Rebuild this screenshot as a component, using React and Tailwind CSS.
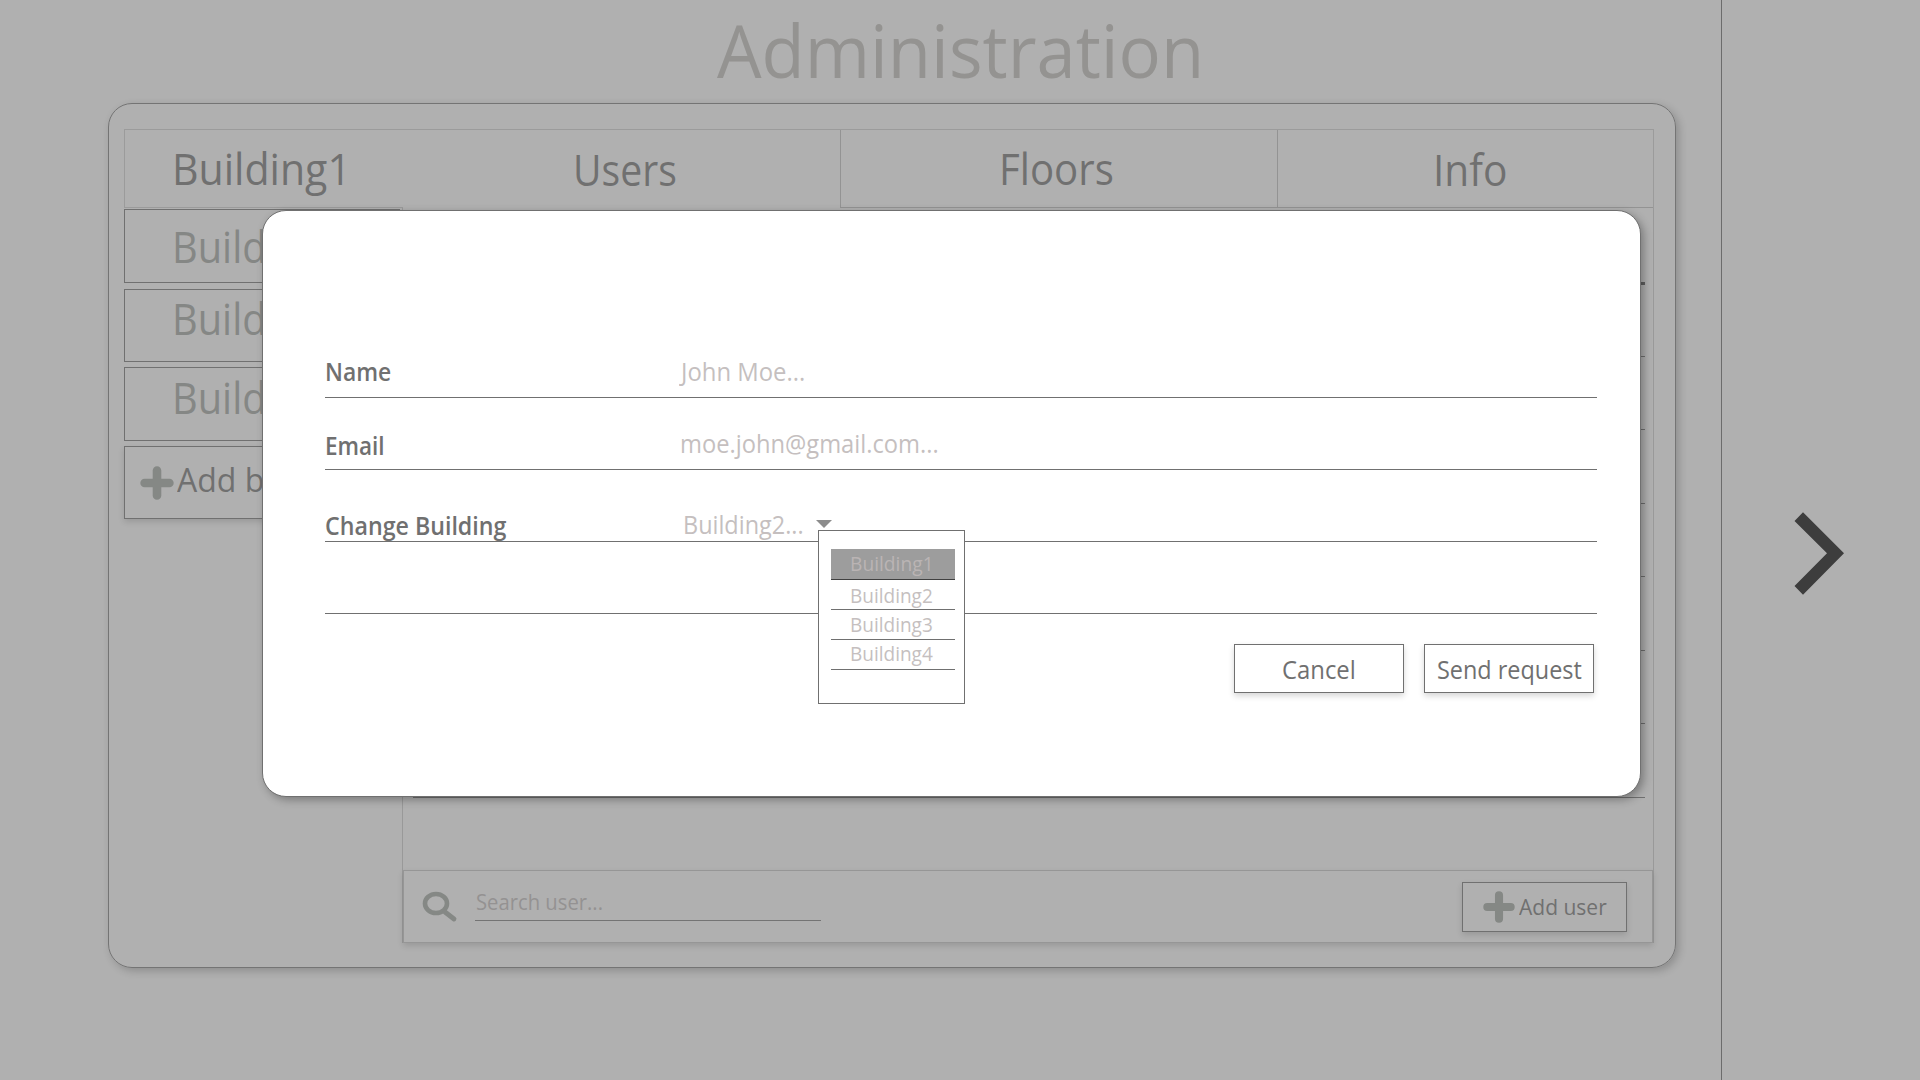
function Label({ className = "", children }) {
  return (
    <span className={`block w-max origin-left whitespace-nowrap leading-none ${className}`}>
      {children}
    </span>
  );
}

function Plus({ className }) {
  return (
    <svg className={`shrink-0 ${className}`} viewBox="0 0 34 34" stroke="#858885" strokeWidth="8.6" strokeLinecap="round">
      <path d="M17 4.6V29.4M4.6 17H29.4" />
    </svg>
  );
}

function BuildingList() {
  return (
    <div className="flex w-[278px] shrink-0 flex-col pt-px text-[43px] text-[#858785]">
      <div className="h-[74px] w-[276px] border border-[#707070] pt-[15px] pl-[47px]">
        <Label className="scale-x-[0.925]">Building2</Label>
      </div>
      <div className="mt-1.5 h-[73px] w-[276px] border border-[#707070] pt-[7px] pl-[47px]">
        <Label className="scale-x-[0.925]">Building3</Label>
      </div>
      <div className="mt-[5px] h-[74px] w-[276px] border border-[#707070] pt-2 pl-[47px]">
        <Label className="scale-x-[0.925]">Building4</Label>
      </div>
      <div className="mt-[5px] flex h-[73px] w-[276px] border border-[#707070] pt-[15px] pl-[15px] text-[33px] text-[#707070] shadow-[0_3px_6px_rgba(0,0,0,0.13)]">
        <Plus className="mt-1 size-[34px]" />
        <Label className="mt-px ml-[3px] scale-x-[0.97]">Add building</Label>
      </div>
    </div>
  );
}

function UserPanel() {
  return (
    <div className="flex w-[1252px] flex-col border-x border-[#999999]">
      <div className="mr-2 ml-2.5 h-[77px] border-b-3 border-[#606060]" />
      <div className="mr-2 ml-2.5">
        {[1, 2, 3, 4, 5, 6, 7].map((row) => (
          <div key={row} className="h-[73.5px] border-b border-[#707070] first:h-[71.5px]" />
        ))}
      </div>
      <div className="mt-auto flex h-[73px] border border-[#969696] pl-[18px] shadow-[0_3px_6px_rgba(0,0,0,0.13)]">
        <svg className="mt-5 h-8 w-9 shrink-0" viewBox="0 0 36 32" fill="none" stroke="#858885" strokeLinecap="round">
          <ellipse cx="14" cy="12.5" rx="11" ry="9.5" strokeWidth="4.6" />
          <path d="M23 21L32 28" strokeWidth="4.8" />
        </svg>
        <div className="mt-[19px] ml-[17px] h-[31px] w-[346px] border-b border-[#747474] text-[22px] text-[#949292]">
          <Label className="ml-px scale-x-[0.92]">Search user...</Label>
        </div>
        <div className="mt-[11px] mr-[25px] ml-auto flex h-[50px] w-[165px] border border-[#707070] pt-[8px] pl-5 text-[22px] text-[#707070] shadow-[0_3px_6px_rgba(0,0,0,0.13)]">
          <Plus className="size-[32px]" />
          <Label className="mt-1 ml-1 scale-x-[0.955]">Add user</Label>
        </div>
      </div>
    </div>
  );
}

function AdminCard() {
  return (
    <div className="ml-[108px] flex h-[865px] w-[1568px] flex-col rounded-[24px] border border-[#747474] pt-[25px] pl-[15px] shadow-[3px_3px_8px_rgba(0,0,0,0.2)]">
      <div className="flex h-[79px] w-[1530px] shrink-0 border-t border-r border-l border-[#9b9b9b] text-[43px] text-[#707070]">
        <div className="w-[278px] border-b border-[#9b9b9b] pt-[17px] pl-[47px]">
          <Label className="scale-x-[0.955]">Building1</Label>
        </div>
        <div className="w-[437px] pt-[18px] pl-[170px]">
          <Label className="scale-x-[0.91]">Users</Label>
        </div>
        <div className="w-[437px] border-b border-l border-[#939393] pt-[17px] pl-[158px]">
          <Label className="scale-x-[0.935]">Floors</Label>
        </div>
        <div className="flex-1 border-b border-l border-[#939393] pt-[18px] pl-[155px]">
          <Label className="scale-x-[0.945]">Info</Label>
        </div>
      </div>
      <div className="flex h-[735px]">
        <BuildingList />
        <UserPanel />
      </div>
    </div>
  );
}

const options = [
  { name: "Building2", box: "h-[30px] pt-1.5" },
  { name: "Building3", box: "h-[30px] pt-[5px]" },
  { name: "Building4", box: "h-[30px] pt-1" },
];

function BuildingMenu() {
  return (
    <div className="absolute top-[319px] left-[555px] h-[174px] w-[147px] border border-[#707070] bg-white pt-[18px] pr-[9px] pl-3 text-[20px] text-[#c5bfbf]">
      <div className="h-[31px] border-b border-[#404040] bg-[#9d9d9d] pt-[5px] pl-[19px] text-[#bab4b4]">
        <Label className="scale-x-[0.96]">Building1</Label>
      </div>
      {options.map((o) => (
        <div key={o.name} className={`border-b border-[#707070] pl-[19px] ${o.box}`}>
          <Label className="scale-x-[0.95]">{o.name}</Label>
        </div>
      ))}
    </div>
  );
}

function RequestDialog() {
  return (
    <div className="relative h-[587px] w-[1379px] rounded-[24px] border border-[#707070] bg-white pt-[114px] pl-[62px] text-[25px] shadow-[3px_3px_8px_rgba(0,0,0,0.3)]">
      <div className="w-[1272px] text-[#c5bfbf]">
        <div className="flex h-[73px] border-b border-[#707070] pt-[34px]">
          <Label className="scale-x-[0.915] font-semibold text-[#707070]">Name</Label>
          <Label className="ml-[284px] scale-x-[0.955]">John Moe...</Label>
        </div>
        <div className="flex h-[72px] border-b border-[#707070] pt-[33px]">
          <Label className="scale-x-[0.9] pt-[2px] font-semibold text-[#707070]">Email</Label>
          <Label className="ml-[289px] scale-x-[0.948]">moe.john@gmail.com...</Label>
        </div>
        <div className="flex h-[72px] border-b border-[#707070] pt-[42px]">
          <Label className="scale-x-[0.928] pt-px font-semibold text-[#707070]">Change Building</Label>
          <Label className="ml-[163px] scale-x-[0.938]">Building2...</Label>
          <svg className="mt-2 ml-1 h-2 w-4" viewBox="0 0 16 8" fill="#8c8c8c">
            <path d="M0 0H16L8 8Z" />
          </svg>
        </div>
        <div className="h-[72px] border-b border-[#707070]" />
      </div>
      <div className="mt-[30px] flex gap-5 pl-[909px] text-[#707070]">
        <button className="h-[49px] w-[170px] border border-[#707070] pt-[2px] pl-[47px] shadow-[0_3px_6px_rgba(0,0,0,0.16)]">
          <Label className="scale-x-[0.954]">Cancel</Label>
        </button>
        <button className="h-[49px] w-[170px] border border-[#707070] pt-[2px] pl-3 shadow-[0_3px_6px_rgba(0,0,0,0.16)]">
          <Label className="scale-x-[0.937]">Send request</Label>
        </button>
      </div>
      <BuildingMenu />
    </div>
  );
}

export default function App() {
  return (
    <div className="relative flex h-[1080px] w-[1920px] overflow-hidden bg-[#b0b0b0] font-['Open_Sans',sans-serif]">
      <main className="w-[1722px] border-r border-[#6c6c6c]">
        <div className="h-[103px] pt-[13px] pl-[717px] text-[74px] text-[#949391]">
          <Label className="scale-x-[0.953]">Administration</Label>
        </div>
        <AdminCard />
      </main>
      <aside className="flex-1 pt-[511px] pl-[72px]">
        <svg className="h-[85px] w-[51px]" viewBox="0 0 51 85" fill="#3d3d3d">
          <path d="M9 1.3L50 42.3L9 83.7L.5 75L33 42.3L.5 10Z" />
        </svg>
      </aside>
      <div className="absolute inset-0 pt-[210px] pl-[262px]">
        <RequestDialog />
      </div>
    </div>
  );
}
